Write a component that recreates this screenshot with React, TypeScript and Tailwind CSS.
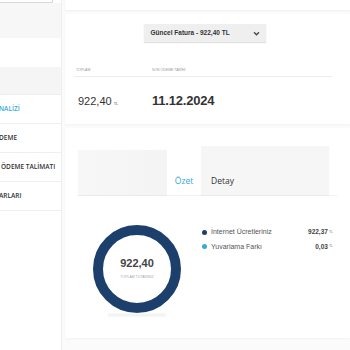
function Chevron() {
  return (
    <svg width="7" height="5" viewBox="0 0 8 6" className="text-[#444]">
      <path d="M1 1.5 L4 4.5 L7 1.5" fill="none" stroke="currentColor" strokeWidth="1.5" />
    </svg>
  );
}

const menu = [
  { label: "NALİZİ", active: true, shift: "-ml-[1px]" },
  { label: "DEME", active: false, shift: "-ml-[1px]" },
  { label: "ÖDEME TALİMATI", active: false, shift: "ml-[1px]" },
  { label: "ARLARI", active: false, shift: "-ml-[1px]" },
];

export default function App() {
  return (
    <div className="flex w-[350px] h-[350px] overflow-hidden bg-white font-['Open_Sans',sans-serif]">
      {/* sidebar */}
      <aside className="w-[62px] shrink-0 flex flex-col border-r border-[#efefef] shadow-[1px_0_3px_rgba(0,0,0,0.04)]">
        <div className="h-[3px] w-[53px] border-b border-r border-[#d9d9d9] bg-white"></div>
        <div className="h-[35px] bg-[#f7f7f7]"></div>
        <div className="h-[29px] bg-white"></div>
        <div className="h-[28px] bg-[#f5f5f5] border-b border-[#ededed]"></div>
        {menu.map((m) => (
          <div
            key={m.label}
            className="h-[29px] flex items-center border-b border-[#efefef] overflow-hidden whitespace-nowrap"
          >
            <span
              className={`${m.shift} text-[6.5px] font-semibold ${
                m.active ? "text-[#35a9d9]" : "text-[#333]"
              }`}
            >
              {m.label}
            </span>
          </div>
        ))}
      </aside>

      {/* main */}
      <main className="flex-1 flex flex-col bg-[#fbfbfb] pl-[3px] gap-[4px]">
        <div className="h-[10px] bg-white shadow-[0_1px_2px_rgba(0,0,0,0.05)]"></div>

        <section className="h-[110px] bg-white shadow-[0_1px_2px_rgba(0,0,0,0.04)] flex flex-col pt-[10px] px-[6px]">
          <div className="flex justify-center pr-[6px]">
            <div className="w-[122px] h-[18px] bg-[#efefef] shadow-[0_1px_1px_rgba(0,0,0,0.12)] flex items-center justify-between pl-[7px] pr-[6px] font-['Liberation_Sans',sans-serif]">
              <span className="text-[6.5px] font-bold text-[#333]">Güncel Fatura - 922,40 TL</span>
              <Chevron />
            </div>
          </div>

          <div className="mt-[26px] ml-[3px] mr-[12px] flex border-b border-[#ededed] pb-[3px] font-['Liberation_Sans',sans-serif] text-[3.5px] text-[#999] uppercase">
            <span className="w-[78px] pl-[2px]">TOPLAM</span>
            <span>SON ÖDEME TARİHİ</span>
          </div>

          <div className="mt-[14px] ml-[3px] flex items-baseline font-['Liberation_Sans',sans-serif] text-[#333]">
            <div className="w-[78px] pl-[4px] flex items-baseline">
              <span className="text-[11px]">922,40</span>
              <span className="text-[4px] ml-[2px] text-[#555]">TL</span>
            </div>
            <span className="text-[13px] font-bold tracking-[-0.2px]">11.12.2024</span>
          </div>
        </section>

        <section className="h-[210px] bg-white shadow-[0_1px_2px_rgba(0,0,0,0.04)] flex flex-col pt-[18px] px-[13px]">
          <div className="flex h-[50px] items-stretch border-b border-[#f2f2f2]">
            <div className="w-[89px] mt-[4px] bg-gradient-to-r from-[#f7f7f7] to-[#f4f4f4] shadow-[0_1px_1px_rgba(0,0,0,0.03)]"></div>
            <div className="w-[34px] flex items-end justify-center pb-[7px] bg-white">
              <span className="text-[8.5px] text-[#35a9d9]">Özet</span>
            </div>
            <div className="w-[128px] bg-[#f6f6f6] flex items-end pl-[10px] pb-[7px] shadow-[0_1px_1px_rgba(0,0,0,0.03)]">
              <span className="text-[8.5px] text-[#333]">Detay</span>
            </div>
          </div>

          <div className="flex mt-[29px]">
            <div className="w-[118px] flex flex-col items-center">
              <div className="w-[88px] h-[88px] rounded-full border-[10px] border-[#1c3f6b] flex flex-col items-center justify-center font-['Liberation_Sans',sans-serif]">
                <span className="text-[11px] font-bold text-[#444] mt-[-3px]">922,40</span>
                <span className="text-[3.5px] text-[#aaa] mt-[3px]">TOPLAM TUTARINIZ</span>
              </div>
              <div className="w-[58px] h-[2px] mt-[1px] rounded-full bg-[#ebebeb] blur-[1px]"></div>
            </div>

            <div className="flex-1 flex flex-col gap-[4px] pt-[2px] pl-[6px] pr-[4px] font-['Liberation_Sans',sans-serif] text-[7px]">
              <div className="flex items-center">
                <span className="w-[5px] h-[5px] rounded-full bg-[#1c3f6b]"></span>
                <span className="ml-[4px] text-[#555] flex-1">İnternet Ücretleriniz</span>
                <span className="font-bold text-[#444] text-[6.5px]">922,37</span>
                <span className="text-[3.5px] text-[#777] ml-[1px]">TL</span>
              </div>
              <div className="flex items-center">
                <span className="w-[5px] h-[5px] rounded-full bg-[#35a9d9]"></span>
                <span className="ml-[4px] text-[#555] flex-1">Yuvarlama Farkı</span>
                <span className="font-bold text-[#444] text-[6.5px]">0,03</span>
                <span className="text-[3.5px] text-[#777] ml-[1px]">TL</span>
              </div>
            </div>
          </div>
        </section>
      </main>
    </div>
  );
}
